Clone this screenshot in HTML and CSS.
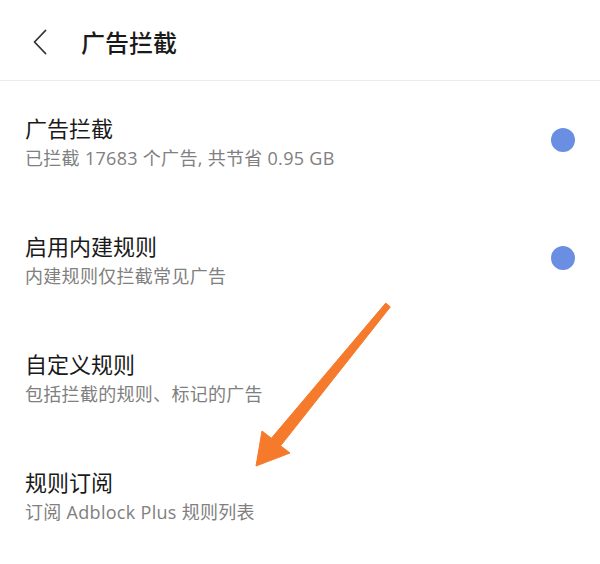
FILE: index.html
```html
<!DOCTYPE html>
<html lang="zh-CN">
<head>
<meta charset="utf-8">
<link rel="stylesheet" href="styles.css">
</head>
<body>
<div class="page">
  <header class="topbar">
    <svg class="back" width="16" height="26" viewBox="0 0 16 26"><path d="M13.5 1.5 L2.5 13 L13.5 24.5" fill="none" stroke="#333" stroke-width="1.8" stroke-linecap="round" stroke-linejoin="round"/></svg>
    <h1 class="title">广告拦截</h1>
  </header>
  <div class="list">
    <div class="item">
      <div class="text">
        <div class="name">广告拦截</div>
        <div class="desc">已拦截 17683 个广告, 共节省 0.95 GB</div>
      </div>
      <span class="dot"></span>
    </div>
    <div class="item">
      <div class="text">
        <div class="name">启用内建规则</div>
        <div class="desc">内建规则仅拦截常见广告</div>
      </div>
      <span class="dot"></span>
    </div>
    <div class="item">
      <div class="text">
        <div class="name">自定义规则</div>
        <div class="desc">包括拦截的规则、标记的广告</div>
      </div>
    </div>
    <div class="item">
      <div class="text">
        <div class="name">规则订阅</div>
        <div class="desc">订阅 Adblock Plus 规则列表</div>
      </div>
    </div>
  </div>
  <svg class="arrow" width="600" height="564" viewBox="0 0 600 564">
    <polygon points="385.7,303.1 390.3,306.9 280.6,445.8 290,453 256,466 262,431 271.4,438.2" fill="#f57a2c" stroke="#f57a2c" stroke-width="1" stroke-linejoin="round"/>
  </svg>
</div>
</body>
</html>
```

FILE: styles.css
```css
html, body {
  margin: 0;
  padding: 0;
  background: #ffffff;
}
body {
  font-family: "Noto Sans CJK SC", "Noto Sans", sans-serif;
  color: #1a1a1a;
}
.page {
  position: relative;
  width: 600px;
  height: 564px;
  overflow: hidden;
}
.topbar {
  height: 81px;
  box-sizing: border-box;
  padding: 3px 0 0 32px;
  display: flex;
  align-items: center;
  border-bottom: 1px solid #ececec;
}
.back {
  display: block;
  margin-right: 33px;
}
.title {
  margin: 0;
  font-size: 24px;
  font-weight: 500;
  line-height: 32px;
  color: #1a1a1a;
}
.list {
  display: flex;
  flex-direction: column;
}
.item {
  height: 118px;
  box-sizing: border-box;
  padding: 31px 25px 0 25px;
  display: flex;
  align-items: flex-start;
  justify-content: space-between;
}
.text {
  display: flex;
  flex-direction: column;
}
.name {
  font-size: 22px;
  line-height: 30px;
  color: #1a1a1a;
}
.desc {
  font-family: "Open Sans", "Noto Sans CJK SC", sans-serif;
  font-size: 18px;
  line-height: 26px;
  padding-top: 3px;
  letter-spacing: 0.3px;
  color: #808080;
}
.dot {
  width: 24px;
  height: 24px;
  border-radius: 50%;
  background: #6a8fe2;
  margin-top: 16px;
}
.arrow {
  position: absolute;
  left: 0;
  top: 0;
}
```
